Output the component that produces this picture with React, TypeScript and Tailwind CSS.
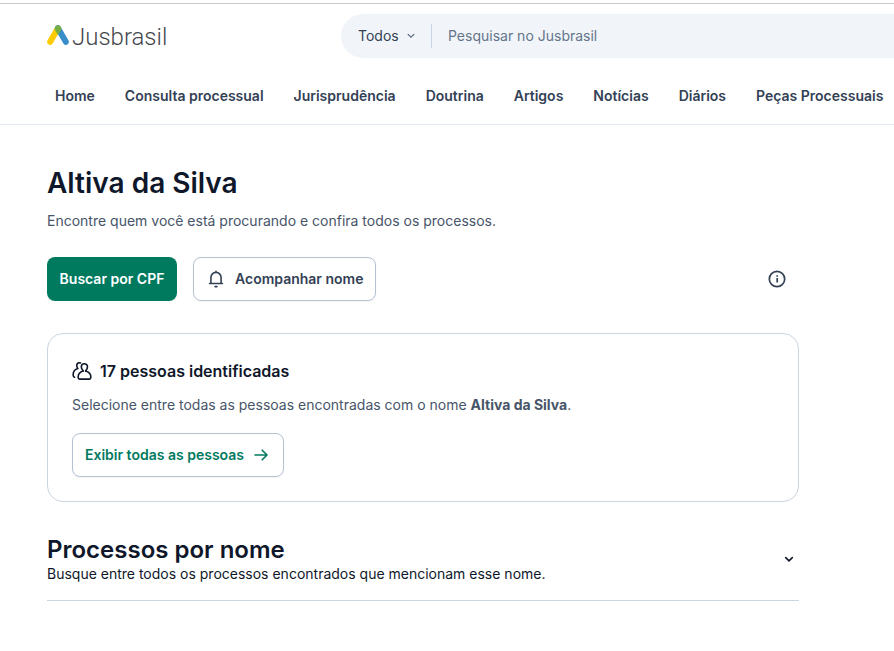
const navItems = [
  'Home',
  'Consulta processual',
  'Jurisprudência',
  'Doutrina',
  'Artigos',
  'Notícias',
  'Diários',
  'Peças Processuais',
];

function Logo() {
  return (
    <a href="#" className="flex items-baseline gap-[3px] pt-[2px] text-[#45474d]">
      <svg width="22" height="20" viewBox="0 0 22 20" fill="none" strokeLinecap="round" aria-hidden="true">
        <path d="M11 3.200 3.200 16.800" stroke="#ffcb05" strokeWidth="6" />
        <path d="M11 3.200 18.800 16.800" stroke="#3a8dcb" strokeWidth="6" />
        <path d="M8.100 2.200a3.300 3.300 0 0 1 5.800 0c.6 1.200.5 2.200 0 3.100L11 10.200 8.100 5.300c-.5-.9-.6-1.900 0-3.100Z" fill="#76b043" />
      </svg>
      <span className="font-[Roboto,sans-serif] text-2xl font-light">Jusbrasil</span>
    </a>
  );
}

function BellIcon() {
  return (
    <svg width="20" height="20" viewBox="0 0 20 20" fill="none" stroke="currentColor" strokeWidth="1.600" strokeLinejoin="round" strokeLinecap="round" aria-hidden="true">
      <path d="M10 2.400v1M4.900 14.500V8.500a5.100 5.100 0 0 1 10.200 0v6M3.600 14.500h12.800M9 17.600h2" />
    </svg>
  );
}

function PeopleIcon() {
  return (
    <svg width="20" height="20" viewBox="0 0 20 20" fill="none" stroke="currentColor" strokeWidth="1.600" strokeLinejoin="round" strokeLinecap="round" aria-hidden="true">
      <path d="M11.200 9C10 7.700 9.300 6.300 9.300 4.800a3.100 3.100 0 0 1 6.200 0c0 1.500-.7 2.900-1.900 4.200" />
      <path d="M11.200 9c-2.900.9-5 3.100-5 5.600v1c0 .9.600 1.500 1.500 1.500h9.600c.9 0 1.500-.6 1.500-1.500v-1c0-2.500-2.300-4.700-5.200-5.600" />
      <path d="M8.500.9C6.400.3 4.700 1.600 4.700 3.400c0 1.200.5 2.200 1.200 3.200C3 7.500 1.200 9.600 1.200 12.200v1.300c0 .9.500 1.500 1.300 1.700" />
    </svg>
  );
}

function InfoIcon() {
  return (
    <svg width="20" height="20" viewBox="0 0 20 20" fill="none" stroke="currentColor" strokeWidth="1.700" aria-hidden="true">
      <circle cx="10" cy="10" r="7.700" />
      <path d="M10.200 9v4.600M10.200 6.200v1.600" />
    </svg>
  );
}

function ArrowIcon() {
  return (
    <svg width="20" height="20" viewBox="0 0 20 20" fill="none" stroke="currentColor" strokeWidth="1.600" strokeLinejoin="round" strokeLinecap="round" aria-hidden="true">
      <path d="M4 10h12M11.200 5.200 16 10l-4.800 4.800" />
    </svg>
  );
}

function Header() {
  return (
    <header className="overflow-hidden border-b border-[#e2e8f0] pt-[3px]">
      <div className="flex items-center justify-between border-t border-[#c8c8c8] pt-[10px] pl-[47px]">
        <Logo />
        <form className="flex h-11 w-[553px] items-center rounded-l-full bg-[#f1f5f9] text-sm">
          <div className="relative flex items-center pl-[17px]">
            <select aria-label="Tipo de busca" className="w-[61px] appearance-none bg-transparent text-[#334155] outline-none">
              <option>Todos</option>
            </select>
            <svg className="pointer-events-none absolute right-1 text-[#64748b]" width="8" height="8" viewBox="0 0 8 8" fill="none" stroke="currentColor" strokeWidth="1.300" strokeLinecap="round" aria-hidden="true">
              <path d="m1.200 2.500 2.800 2.700 2.800-2.700" />
            </svg>
          </div>
          <span className="ml-3 h-6 w-px bg-[#cbd5e1]" />
          <input
            type="search"
            aria-label="Pesquisar no Jusbrasil"
            placeholder="Pesquisar no Jusbrasil"
            className="min-w-0 flex-1 bg-transparent pl-4 outline-none placeholder:text-[#64748b]"
          />
        </form>
      </div>
      <nav className="flex gap-[14px] pt-[26px] pb-4 pl-[47px]">
        {navItems.map(item => (
          <a key={item} href="#" className="px-2 text-sm leading-6 font-semibold whitespace-nowrap text-[#334155]">
            {item}
          </a>
        ))}
      </nav>
    </header>
  );
}

export default function App() {
  return (
    <div className="min-h-screen bg-white font-['Inter',sans-serif] text-[#0f172a]">
      <Header />
      <main className="mx-[47px] max-w-[752px] pt-10">
        <h1 className="text-[28px] leading-9 font-semibold">Altiva da Silva</h1>
        <p className="mt-2 text-sm leading-6 text-[#475569]">
          Encontre quem você está procurando e confira todos os processos.
        </p>

        <div className="mt-6 flex items-center gap-4">
          <button className="h-11 min-w-[130px] rounded-lg bg-[#007a5f] px-3 text-sm font-semibold text-white">Buscar por CPF</button>
          <button className="flex h-11 items-center gap-[9px] rounded-lg border border-[#b4c1d3] px-3 text-sm font-semibold text-[#334155] shadow-xs">
            <BellIcon />
            Acompanhar nome
          </button>
          <button aria-label="Informações" className="mr-3 ml-auto text-[#334155]">
            <InfoIcon />
          </button>
        </div>

        <section className="mt-8 rounded-2xl border border-[#cbd5e1] p-6">
          <h2 className="flex items-center gap-2 text-base leading-[27px] font-semibold">
            <PeopleIcon />
            17 pessoas identificadas
          </h2>
          <p className="mt-2 text-sm leading-6 text-[#475569]">
            Selecione entre todas as pessoas encontradas com o nome <strong className="font-bold">Altiva da Silva</strong>.
          </p>
          <button className="mt-4 flex h-11 items-center gap-[7px] rounded-lg border border-[#b4c1d3] px-3 text-sm font-semibold text-[#007a5f] shadow-xs">
            Exibir todas as pessoas
            <ArrowIcon />
          </button>
        </section>

        <section className="mt-8 flex items-center justify-between border-b border-[#cbd5e1] pb-4">
          <div>
            <h2 className="text-2xl leading-8 font-semibold">Processos por nome</h2>
            <p className="pb-[2px] text-sm leading-4">Busque entre todos os processos encontrados que mencionam esse nome.</p>
          </div>
          <button aria-label="Expandir processos por nome" className="p-1">
            <svg width="12" height="12" viewBox="0 0 12 12" fill="none" stroke="currentColor" strokeWidth="1.600" strokeLinecap="round" aria-hidden="true">
              <path d="m2.700 4.600 3.300 3.200 3.300-3.200" />
            </svg>
          </button>
        </section>
      </main>
    </div>
  );
}
